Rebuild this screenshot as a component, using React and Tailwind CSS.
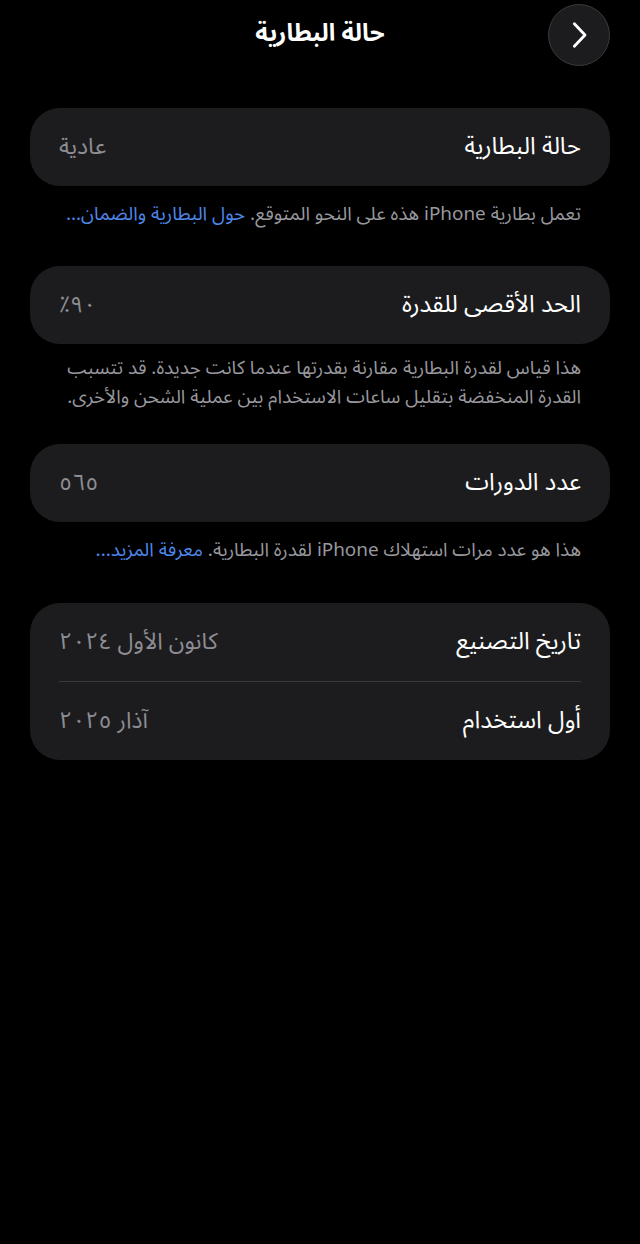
import React from 'react';

const font = { fontFamily: '"Noto Sans Arabic", "DejaVu Sans", sans-serif' };

const Row = ({ label, value }) => (
  <div className="flex h-[78px] items-center justify-between">
    <span className="text-[24px] text-white">{label}</span>
    <span className="text-[23px] text-[#8d8d93]">{value}</span>
  </div>
);

const Card = ({ children }) => (
  <div className="rounded-[30px] bg-[#1c1c1e] px-[29px]">{children}</div>
);

const Note = ({ children, className = '' }) => (
  <p className={`px-[29px] text-[18.9px] leading-[29px] text-[#98989e] ${className}`}>{children}</p>
);

const Link = ({ children }) => <span className="text-[#4e87ea]">{children}</span>;

export default function App() {
  return (
    <div dir="rtl" className="min-h-[1244px] w-[640px] bg-black" style={font}>
      {/* header */}
      <div className="relative flex h-[68px] items-center justify-center">
        <h1 className="text-[24px] font-bold text-white">حالة البطارية</h1>
        <button className="absolute right-[30px] top-[4px] flex h-[62px] w-[62px] items-center justify-center rounded-full border border-[#3a3a3c] bg-[#1c1c1e]">
          <svg width="32" height="32" viewBox="0 0 24 24" fill="none" stroke="white" strokeWidth="2.1" strokeLinecap="round" strokeLinejoin="round">
            <path d="M8.5 3.5l8 8.5-8 8.5" />
          </svg>
        </button>
      </div>

      <div className="px-[30px] pt-[40px]">
        <Card>
          <Row label="حالة البطارية" value="عادية" />
        </Card>
        <Note className="pt-[14px]">
          تعمل بطارية iPhone هذه على النحو المتوقع. <Link>حول البطارية والضمان...</Link>
        </Note>

        <div className="mt-[37px]">
          <Card>
            <Row label="الحد الأقصى للقدرة" value="٩٠٪" />
          </Card>
        </div>
        <Note className="pt-[10px]">
          هذا قياس لقدرة البطارية مقارنة بقدرتها عندما كانت جديدة. قد تتسبب القدرة المنخفضة بتقليل ساعات الاستخدام بين عملية الشحن والأخرى.
        </Note>

        <div className="mt-[32px]">
          <Card>
            <Row label="عدد الدورات" value="٥٦٥" />
          </Card>
        </div>
        <Note className="pt-[14px]">
          هذا هو عدد مرات استهلاك iPhone لقدرة البطارية. <Link>معرفة المزيد...</Link>
        </Note>

        <div className="mt-[38px]">
          <Card>
            <Row label="تاريخ التصنيع" value="كانون الأول ٢٠٢٤" />
            <div className="h-px bg-[#3a3a3c]" />
            <Row label="أول استخدام" value="آذار ٢٠٢٥" />
          </Card>
        </div>
      </div>
    </div>
  );
}
